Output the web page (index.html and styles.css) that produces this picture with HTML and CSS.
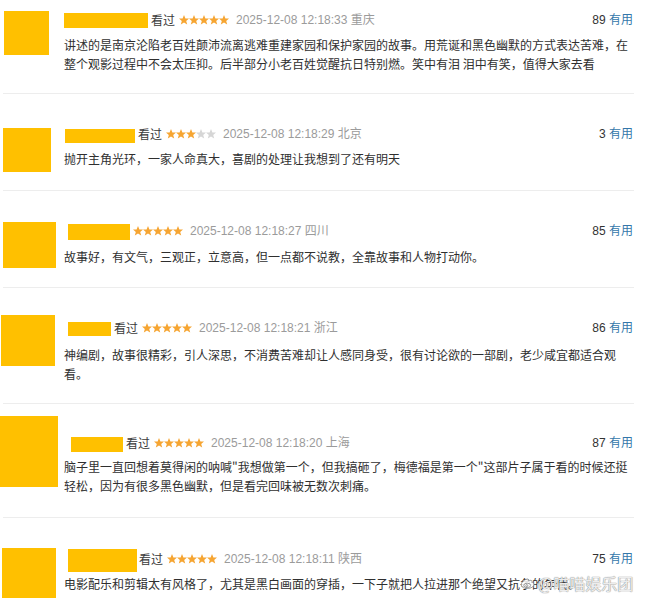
FILE: index.html
```html
<!DOCTYPE html>
<html lang="zh-CN">
<head>
<meta charset="utf-8">
<title>短评</title>
<link rel="stylesheet" href="styles.css">
</head>
<body>
<svg class="defs" width="0" height="0" aria-hidden="true">
  <defs>
    <polygon id="star" points="5,0 6.4,3.5 10,3.6 7.2,5.9 8.2,9.6 5,7.5 1.8,9.6 2.8,5.9 0,3.6 3.6,3.5"/>
  </defs>
</svg>
<div class="list">
  <div class="comment c1">
    <div class="avatar"></div>
    <div class="body">
      <div class="meta">
        <span class="name"></span><span class="watched">看过</span>
        <svg class="stars" viewBox="0 0 50 10"><use href="#star" x="0" class="on"/><use href="#star" x="10" class="on"/><use href="#star" x="20" class="on"/><use href="#star" x="30" class="on"/><use href="#star" x="40" class="on"/></svg>
        <span class="time">2025-12-08 12:18:33 重庆</span>
        <span class="votes">89 <span class="useful">有用</span></span>
      </div>
      <p class="text">讲述的是南京沦陷老百姓颠沛流离逃难重建家园和保护家园的故事。用荒诞和黑色幽默的方式表达苦难，在整个观影过程中不会太压抑。后半部分小老百姓觉醒抗日特别燃。笑中有泪 泪中有笑，值得大家去看</p>
    </div>
  </div>

  <div class="comment c2">
    <div class="avatar"></div>
    <div class="body">
      <div class="meta">
        <span class="name"></span><span class="watched">看过</span>
        <svg class="stars" viewBox="0 0 50 10"><use href="#star" x="0" class="on"/><use href="#star" x="10" class="on"/><use href="#star" x="20" class="on"/><use href="#star" x="30" class="off"/><use href="#star" x="40" class="off"/></svg>
        <span class="time">2025-12-08 12:18:29 北京</span>
        <span class="votes">3 <span class="useful">有用</span></span>
      </div>
      <p class="text">抛开主角光环，一家人命真大，喜剧的处理让我想到了还有明天</p>
    </div>
  </div>

  <div class="comment c3">
    <div class="avatar"></div>
    <div class="body">
      <div class="meta">
        <span class="name"></span>
        <svg class="stars" viewBox="0 0 50 10"><use href="#star" x="0" class="on"/><use href="#star" x="10" class="on"/><use href="#star" x="20" class="on"/><use href="#star" x="30" class="on"/><use href="#star" x="40" class="on"/></svg>
        <span class="time">2025-12-08 12:18:27 四川</span>
        <span class="votes">85 <span class="useful">有用</span></span>
      </div>
      <p class="text">故事好，有文气，三观正，立意高，但一点都不说教，全靠故事和人物打动你。</p>
    </div>
  </div>

  <div class="comment c4">
    <div class="avatar"></div>
    <div class="body">
      <div class="meta">
        <span class="name"></span><span class="watched">看过</span>
        <svg class="stars" viewBox="0 0 50 10"><use href="#star" x="0" class="on"/><use href="#star" x="10" class="on"/><use href="#star" x="20" class="on"/><use href="#star" x="30" class="on"/><use href="#star" x="40" class="on"/></svg>
        <span class="time">2025-12-08 12:18:21 浙江</span>
        <span class="votes">86 <span class="useful">有用</span></span>
      </div>
      <p class="text">神编剧，故事很精彩，引人深思，不消费苦难却让人感同身受，很有讨论欲的一部剧，老少咸宜都适合观看。</p>
    </div>
  </div>

  <div class="comment c5">
    <div class="avatar"></div>
    <div class="body">
      <div class="meta">
        <span class="name"></span><span class="watched">看过</span>
        <svg class="stars" viewBox="0 0 50 10"><use href="#star" x="0" class="on"/><use href="#star" x="10" class="on"/><use href="#star" x="20" class="on"/><use href="#star" x="30" class="on"/><use href="#star" x="40" class="on"/></svg>
        <span class="time">2025-12-08 12:18:20 上海</span>
        <span class="votes">87 <span class="useful">有用</span></span>
      </div>
      <p class="text">脑子里一直回想着莫得闲的呐喊"我想做第一个，但我搞砸了，梅德福是第一个"这部片子属于看的时候还挺轻松，因为有很多黑色幽默，但是看完回味被无数次刺痛。</p>
    </div>
  </div>

  <div class="comment c6">
    <div class="avatar"></div>
    <div class="body">
      <div class="meta">
        <span class="name"></span><span class="watched">看过</span>
        <svg class="stars" viewBox="0 0 50 10"><use href="#star" x="0" class="on"/><use href="#star" x="10" class="on"/><use href="#star" x="20" class="on"/><use href="#star" x="30" class="on"/><use href="#star" x="40" class="on"/></svg>
        <span class="time">2025-12-08 12:18:11 陕西</span>
        <span class="votes">75 <span class="useful">有用</span></span>
      </div>
      <p class="text">电影配乐和剪辑太有风格了，尤其是黑白画面的穿插，一下子就把人拉进那个绝望又抗争的年代。</p>
    </div>
    <div class="watermark">
      <svg class="wb-logo" viewBox="0 0 16 14"><path d="M6.5 3.2C3.6 4.3 1 6.8 1.3 9.1c.4 2.6 4 3.8 7.3 3.3 3.6-.5 5.8-2.6 5.2-4.6-.3-1-1.300-1.4-2-1.3.5-1.3.2-2.1-.9-2.2-.8-.1-1.7.3-2.3.6.4-1.2-.4-2.4-2.1-1.7z"/><ellipse cx="7.2" cy="9.4" rx="3.4" ry="2.2"/><circle cx="6.8" cy="9.6" r="1"/></svg>
      <span>@喵喵娱乐团</span>
    </div>
  </div>
</div>
</body>
</html>
```
FILE: styles.css
```css
body {
  margin: 0;
  background: #ffffff;
  font-family: "Liberation Sans", "Noto Sans CJK SC", sans-serif;
  color: #333333;
}

.defs {
  position: absolute;
  width: 0;
  height: 0;
}

.list {
  margin: 0 16px 0 3px;
}

.comment {
  display: grid;
  grid-template-columns: 61px 1fr;
  padding: 32px 1px 22px 0;
  border-bottom: 1px solid #ededed;
  position: relative;
}

.avatar {
  background: #ffc000;
  align-self: start;
}

.body {
  min-width: 0;
}

.meta {
  display: flex;
  align-items: center;
  height: 16px;
  font-size: 12px;
  line-height: 16px;
  white-space: nowrap;
}

.name {
  display: block;
  flex: none;
  background: #ffc000;
}

.watched {
  margin-left: 3px;
  color: #3a3a3a;
  font-family: "Noto Sans CJK SC", sans-serif;
}

.stars {
  display: block;
  flex: none;
  width: 50px;
  height: 10px;
  margin-left: 4px;
}

.stars .on {
  fill: #f6a532;
}

.stars .off {
  fill: #d6d6d6;
}

.time {
  margin-left: 7px;
  color: #9b9b9b;
}

.votes {
  margin-left: auto;
  color: #333333;
}

.useful {
  color: #3377aa;
}

.text {
  margin: 6.5px 0 0;
  font-family: "Noto Sans CJK SC", sans-serif;
  font-size: 12px;
  line-height: 19px;
  color: #2f2f2f;
}

/* avatars never stretch the row: the bottom margin cancels their height */
.c1 .avatar,
.c2 .avatar,
.c3 .avatar,
.c4 .avatar,
.c5 .avatar,
.c6 .avatar {
  margin-bottom: -80px;
}

/* block 1 */
.c1 { padding-top: 12px; padding-bottom: 20.5px; }
.c1 .avatar { width: 45px; height: 44px; margin-top: -1px; margin-left: 1px; }
.c1 .name { width: 84px; height: 15px; margin-top: 1px; }

/* block 2 */
.c2 { padding-bottom: 22.5px; }
.c2 .avatar { width: 48px; height: 44px; margin-top: 2px; margin-left: 0; }
.c2 .name { width: 70px; height: 14px; margin: 4px 0 0 1px; }

/* block 3 */
.c3 { padding-bottom: 21.5px; }
.c3 .avatar { width: 53px; height: 46px; margin-top: -1px; margin-left: 0; }
.c3 .name { width: 62px; height: 16px; margin: 2px 0 0 4px; }
.c3 .stars { margin-left: 3px; }
.c3 .text { margin-top: 7.5px; }

/* block 4 */
.c4 { padding-bottom: 20.5px; }
.c4 .avatar { width: 54px; height: 51px; margin-top: -5px; margin-left: -2px; }
.c4 .name { width: 43px; height: 14px; margin: 2px 0 0 4px; }
.c4 .text { margin-top: 8.5px; }

/* block 5 */
.c5 { padding-top: 31px; padding-bottom: 22.5px; }
.c5 .avatar { width: 58px; height: 71px; margin-top: -19px; margin-left: -3px; }
.c5 .name { width: 52px; height: 15px; margin: 3px 0 0 7px; }
.c5 .text { margin-top: 5.5px; }

/* block 6 */
.c6 { padding-top: 33px; border-bottom: none; }
.c6 .avatar { width: 54px; height: 50px; margin-top: -3px; margin-left: -1px; }
.c6 .name { width: 69px; height: 23px; margin: 3px 0 0 4px; }
.c6 .watched { margin-left: 2px; }

.watermark {
  position: absolute;
  left: 517px;
  top: 55px;
  display: flex;
  align-items: center;
  gap: 2px;
  font-family: "Noto Sans CJK SC", sans-serif;
  font-size: 16px;
  line-height: 20px;
  color: rgba(255, 255, 255, 0.85);
  text-shadow: 0 0 1px #8a8a8a, 0 0 1px #8a8a8a;
  white-space: nowrap;
}

.wb-logo {
  width: 16px;
  height: 14px;
  fill: rgba(255, 255, 255, 0.85);
  stroke: #8f8f8f;
  stroke-width: 0.9;
}
```
